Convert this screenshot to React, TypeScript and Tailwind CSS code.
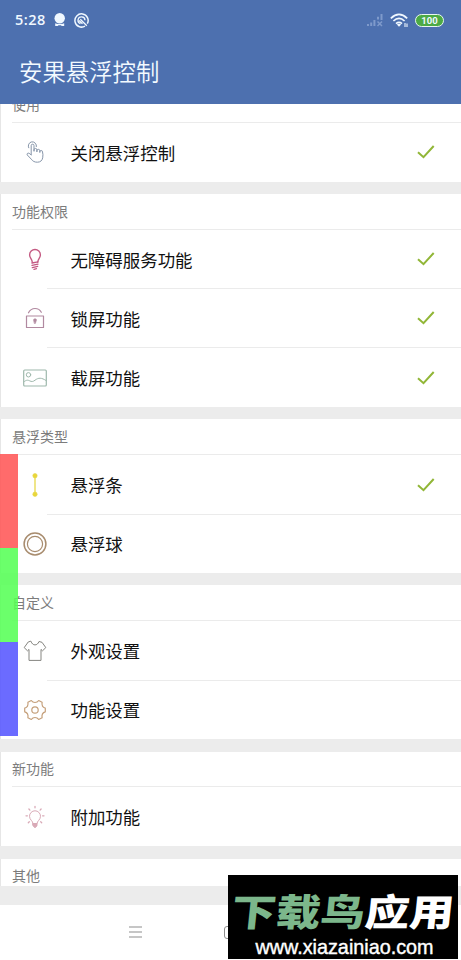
import type { ReactNode } from "react";

const iconProps = {
  fill: "none",
  strokeLinecap: "round" as const,
  strokeLinejoin: "round" as const,
  strokeWidth: 1,
};

const TapIcon = () => (
  <svg width="24" height="24" viewBox="0 0 24 24" {...iconProps} stroke="#8796aa">
    <path d="M8.200 14.600V5.600a1.400 1.400 0 0 1 2.800 0v5.700V9.900a1.300 1.300 0 0 1 2.900 0v2-1.100a1.300 1.300 0 0 1 2.900 0v1.700-.7a1.300 1.300 0 0 1 2.700.1c.5 1.600.6 3.900.2 5.900-.6 2.900-2.300 4.300-5.200 4.400-2.900.1-4.800-1-6.200-3L4.300 15c-.9-1.200.6-2.400 1.800-1.700l2.100 1.600" />
    <path d="M5.700 7.800a4.100 4.100 0 1 1 7.700-1.200" />
  </svg>
);

const BulbIcon = () => (
  <svg width="24" height="24" viewBox="0 0 24 24" {...iconProps} stroke="#c45a83">
    <path strokeWidth="1.400" d="M9.300 15.200c0-3-2.700-4.300-2.700-7.300a5.400 5.400 0 0 1 10.800 0c0 3-2.700 4.300-2.700 7.300" />
    <path strokeWidth="1.300" d="M9 16l6-1.200M9 18.300l6-1.200M9.300 20.600l5.400-1.200M11 22.300l2.500-.6" />
  </svg>
);

const LockIcon = () => (
  <svg width="24" height="24" viewBox="0 0 24 24" {...iconProps} stroke="#b189a0">
    <path strokeWidth="1.200" d="M3.500 10h17v11.500h-17zM5.500 6.800C7 3.800 9.300 2.500 12 2.500s5 1.300 6.300 3.800" />
    <path fill="#b189a0" strokeWidth=".6" d="M10.500 14a1.500 1.200 0 0 1 3 0l-1.200 3.500h-.6z" />
  </svg>
);

const PictureIcon = () => (
  <svg width="24" height="24" viewBox="0 0 24 24" {...iconProps} stroke="#9eb8ac">
    <rect x=".7" y="4" width="22.600" height="16" rx="1" strokeWidth="1.200" />
    <circle cx="5.500" cy="8.800" r="2.200" />
    <path d="M1 15.800c2.500-2.200 4-1.800 5.800-.9s3.200.9 5.200-.7c3.500-2.700 6.500-2.700 11 .3" />
  </svg>
);

const BarIcon = () => (
  <svg width="24" height="24" viewBox="0 0 24 24" stroke="#e6d84a" fill="#e9d63a">
    <path strokeWidth="1.300" d="M12 3v18" />
    <circle cx="12" cy="2.700" r="2.200" strokeWidth=".6" />
    <circle cx="12" cy="21.200" r="2.200" strokeWidth=".6" />
  </svg>
);

const BallIcon = () => (
  <svg width="24" height="24" viewBox="0 0 24 24" fill="none" stroke="#a88c6e">
    <circle cx="12" cy="12" r="10.900" strokeWidth="1.500" />
    <circle cx="12" cy="12" r="7.600" strokeWidth="1.200" />
  </svg>
);

const ShirtIcon = () => (
  <svg width="24" height="24" viewBox="0 0 24 24" {...iconProps} stroke="#858580">
    <path d="M8 2.500c1 2.400 2.300 3.400 4 3.400s3-1 4-3.400l3 .8 3.800 5.300-3.300 3.200-1.500-1.400v11H6V10.400l-1.500 1.400-3.300-3.200L5 3.300z" />
  </svg>
);

const GearIcon = () => (
  <svg width="24" height="24" viewBox="0 0 24 24" {...iconProps} stroke="#c5a07b">
    <path strokeWidth="1.200" d="M8.300 2.500C9.300 4 10.500 4.500 12 4.500s2.700-.5 3.700-2l3.400 1.700c-.6 3.600.5 5.300 3.200 6v3.600c-2.700.7-3.800 2.400-3.200 6l-3.400 1.700c-1-1.500-2.200-2-3.700-2s-2.700.5-3.700 2l-3.400-1.700c.6-3.600-.5-5.300-3.200-6v-3.600c2.700-.7 3.800-2.400 3.200-6z" />
    <circle cx="12" cy="12" r="3.200" strokeWidth="1.200" />
  </svg>
);

const IdeaIcon = () => (
  <svg width="24" height="24" viewBox="0 0 24 24" {...iconProps} stroke="#d9aab7">
    <path d="M10 18.500c0-2.800-3.500-3.400-3.500-7.200a5.500 5.500 0 0 1 11 0c0 3.800-3.500 4.400-3.500 7.200z" />
    <path fill="#d9aab7" d="M10 18.500h4v2.300l-2 1.900-2-1.900z" />
    <path strokeWidth="1.300" d="M12 1.300v1.500M5.900 4l1 1.100M18.100 4l-1 1.100M3 10.800h1.400M19.600 10.800H21M5.300 17.800l1-1M18.700 17.800l-1-1" />
  </svg>
);

const Check = () => (
  <svg className="mr-[26px] ml-auto" width="18" height="14" viewBox="0 0 18 14" fill="none" stroke="#91b637" strokeWidth="2">
    <path d="M1 7.200l5.500 5L16.700 1" />
  </svg>
);

type Item = { icon: ReactNode; label: string; checked?: boolean };

const sections: { title: string; items: Item[] }[] = [
  { title: "使用", items: [{ icon: <TapIcon />, label: "关闭悬浮控制", checked: true }] },
  {
    title: "功能权限",
    items: [
      { icon: <BulbIcon />, label: "无障碍服务功能", checked: true },
      { icon: <LockIcon />, label: "锁屏功能", checked: true },
      { icon: <PictureIcon />, label: "截屏功能", checked: true },
    ],
  },
  {
    title: "悬浮类型",
    items: [
      { icon: <BarIcon />, label: "悬浮条", checked: true },
      { icon: <BallIcon />, label: "悬浮球" },
    ],
  },
  {
    title: "自定义",
    items: [
      { icon: <ShirtIcon />, label: "外观设置" },
      { icon: <GearIcon />, label: "功能设置" },
    ],
  },
  { title: "新功能", items: [{ icon: <IdeaIcon />, label: "附加功能" }] },
  { title: "其他", items: [] },
];

function Section({ title, items }: { title: string; items: Item[] }) {
  return (
    <section className="mb-[12.200px] border-l border-[#e6e6e6] bg-white">
      <h2 className="ml-[11px] flex h-[35.700px] items-center border-b border-[#ebebeb] pb-px text-[14px] leading-none text-[#7c7c7c]">
        {title}
      </h2>
      {items.map((item, i) => (
        <div key={item.label} className="relative flex h-[59.150px] items-center pl-[22px]">
          {item.icon}
          <span className="ml-[23.500px] text-[17.450px] leading-none text-[#111]">{item.label}</span>
          {item.checked && <Check />}
          {i < items.length - 1 && <div className="absolute right-0 bottom-[-0.5px] left-[46px] h-px bg-[#ebebeb]" />}
        </div>
      ))}
    </section>
  );
}

function StatusBar() {
  return (
    <div className="flex h-10 items-center pl-[15px] text-[#f0f8ff]">
      <span className="w-[38px] font-['Open_Sans'] text-[14.500px] leading-none font-semibold tracking-[0.5px]">5:28</span>
      <svg width="13" height="14" viewBox="0 0 13 14" fill="currentColor">
        <circle cx="6.700" cy="5.200" r="5.200" />
        <path d="M2.200 10.200q4.500 1.700 9 0V13H8.700l-.8-.8H5.500l-.8.800H2.200z" />
      </svg>
      <svg className="ml-[8px]" width="15" height="15" viewBox="0 0 15 15" fill="none" stroke="currentColor" strokeWidth="1.500">
        <path d="M11 13.100A6.600 6.600 0 1 1 13.300 10.700" />
        <path d="M6.500 10.700a3.500 3.500 0 1 1 4.500-3.500M6.300 6.200l6.500 6.500M5 7.500l3.500 3.300" strokeWidth="1.300" />
      </svg>
      <svg className="ml-auto" width="18" height="14" viewBox="0 0 18 14" fill="none" stroke="#7f9acb" strokeWidth="2">
        <path d="M2 13v-2M5.200 13V9.500M8.400 13V7M12 6.500V3.800M15.500 7V1" />
        <path strokeWidth="1.500" d="M11.500 8.500l4.500 4.500M16 8.500L11.500 13" />
      </svg>
      <svg className="ml-[6px]" width="19" height="15" viewBox="0 0 19 15" fill="none" stroke="currentColor" strokeWidth="1.700">
        <path d="M.8 5.300Q9 -2.500 17.200 5.300M3.400 8Q9 2.800 14.600 8M6 10.600q3-2.500 6 0" />
        <path fill="currentColor" stroke="none" d="M6.800 11.500q2.200-1.500 4.400 0L9 13.800z" />
        <path strokeWidth="1.100" d="M15 10v4M17 10.500v3.500" />
      </svg>
      <span className="mr-[17px] ml-[6px] flex h-[13px] w-[29px] items-center justify-center rounded-full border-[1.500px] border-[#e8f7ef] bg-[#4caa45] pt-px font-['Roboto'] text-[9.500px] leading-none font-bold">
        100
      </span>
    </div>
  );
}

export default function App() {
  return (
    <div className="relative flex h-[960px] w-[461px] flex-col overflow-hidden bg-[#ececec] font-['Noto_Sans_CJK_SC',sans-serif]">
      <header className="h-[103.500px] shrink-0 bg-[#4d70af]">
        <StatusBar />
        <h1 className="flex h-16 items-center pl-[19px] text-[23.400px] leading-none font-[350] text-[#f3faff]">安果悬浮控制</h1>
      </header>
      <main className="h-[782.500px] shrink-0 overflow-hidden">
        <div className="-mt-[16.500px]">
          {sections.map((s) => (
            <Section key={s.title} {...s} />
          ))}
        </div>
      </main>
      <nav className="mt-[19px] flex h-[55px] shrink-0 items-center bg-white pb-px pl-[129px]">
        <svg width="13" height="12" viewBox="0 0 13 12" stroke="#8d8d8d" strokeWidth="1.200">
          <path d="M0 1h13M0 6h13M0 11h13" />
        </svg>
        <div className="ml-[82px] h-[13px] w-[13px] rounded-[3px] border border-[#8d8d8d]" />
      </nav>

      <div className="absolute top-[454.400px] left-0 w-[17.600px]">
        <div className="h-[94px] bg-[#ff5555]/87" />
        <div className="h-[94px] bg-[#55ff55]/87" />
        <div className="h-[94px] bg-[#5555ff]/87" />
      </div>

      <div className="absolute top-[875px] left-[228px] flex h-[84px] w-[230px] flex-col items-center overflow-hidden bg-black">
        <div className="mt-[13px] flex h-[44px] -skew-x-6 items-center text-[44.500px] leading-none font-black whitespace-nowrap text-[#7cb78b]">
          <span className="inline-block scale-y-[0.84]">
            下载鸟<span className="text-white">应用</span>
          </span>
        </div>
        <div className="mt-[4px] ml-[3px] font-['Liberation_Sans'] text-[19.800px] leading-[22px] text-white [-webkit-text-stroke:0.400px_white]">
          www.xiazainiao.com
        </div>
      </div>
    </div>
  );
}
